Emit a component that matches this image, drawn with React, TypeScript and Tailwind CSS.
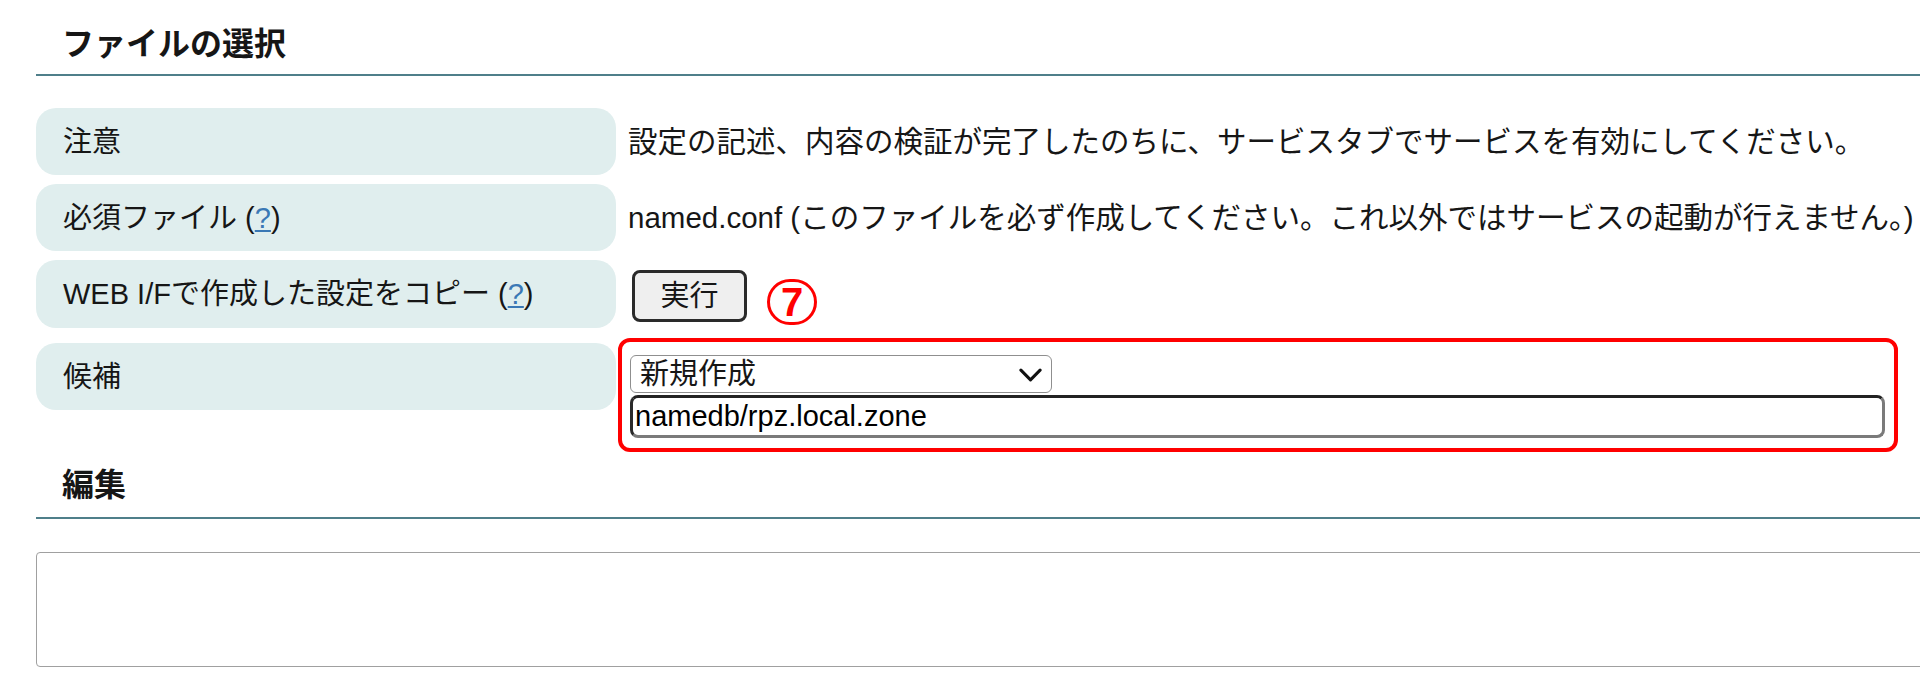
const labelBox =
  'w-[580px] h-[67px] shrink-0 rounded-[20px] bg-[#e0eeee] flex items-center pl-[27px]';

function Help() {
  return (
    <>
      {' '}(<a href="#" className="text-[#3a78b5] underline underline-offset-2">?</a>)
    </>
  );
}

function SectionTitle({ children, className }: { children: React.ReactNode; className: string }) {
  return (
    <div className={`pl-[26px] border-b-2 border-[#4f7f8a] ${className}`}>
      <h2 className="text-[32px] font-bold leading-[36px]">{children}</h2>
    </div>
  );
}

export default function App() {
  return (
    <div className="w-[1920px] h-[696px] overflow-hidden bg-white pl-[36px] text-[29px] leading-[36px] text-[#161616] font-['Liberation_Sans','Noto_Sans_CJK_JP',sans-serif]">
      {/* ファイルの選択 */}
      <SectionTitle className="pt-[26px] pb-[12px]">ファイルの選択</SectionTitle>

      <div className="mt-[32px] flex flex-col">
        <div className="flex">
          <div className={labelBox}>注意</div>
          <div className="pl-[12px] flex items-center whitespace-nowrap text-[29.5px]">
            設定の記述、内容の検証が完了したのちに、サービスタブでサービスを有効にしてください。
          </div>
        </div>

        <div className="mt-[9px] flex">
          <div className={labelBox}>
            必須ファイル<Help />
          </div>
          <div className="pl-[12px] flex items-center whitespace-nowrap text-[29.5px]">
            named.conf (このファイルを必ず作成してください。これ以外ではサービスの起動が行えません。)
          </div>
        </div>

        <div className="mt-[9px] flex">
          <div className={`${labelBox} h-[68px]`}>
            WEB I/Fで作成した設定をコピー<Help />
          </div>
          <div className="pl-[16px] flex items-start pt-[10px]">
            <button className="w-[115px] h-[52px] rounded-[8px] border-[3px] border-[#2a2a2a] bg-[#efefef] text-[29px] leading-none">
              実行
            </button>
            {/* annotation marker */}
            <span className="ml-[20px] mt-[9px] w-[50px] h-[46px] rounded-full border-[3px] border-[#ff0000] flex items-center justify-center text-[#ff0000] text-[40px] font-bold leading-none">
              7
            </span>
          </div>
        </div>

        <div className="mt-[10px] flex items-start">
          <div className={`${labelBox} mt-[5px]`}>候補</div>
          <div className="ml-[2px] w-[1280px] rounded-[12px] border-4 border-[#ff0000] pt-[13px] pl-[8px] pr-[9px] pb-[10px]">
            <div className="relative w-[422px] h-[38px] rounded-[6px] border border-[#8f8f8f] bg-white flex items-center pl-[9px]">
              新規作成
              <svg
                viewBox="0 0 24 14"
                className="absolute right-[9px] top-[12px] w-[23px] h-[14px]"
                fill="none"
                stroke="#111"
                strokeWidth={3.2}
                strokeLinecap="round"
                strokeLinejoin="round"
              >
                <polyline points="2,2 12,12 22,2" />
              </svg>
            </div>
            <input
              readOnly
              value="namedb/rpz.local.zone"
              className="mt-[2px] w-full h-[43px] rounded-[8px] border-[3px] border-t-[#222] border-l-[#2a2a2a] border-r-[#7a7a7a] border-b-[#7a7a7a] bg-white px-[2px] text-[29px] text-black outline-none font-['Liberation_Sans',sans-serif]"
            />
          </div>
        </div>
      </div>

      {/* 編集 */}
      <SectionTitle className="pt-[15px] pb-[14px]">編集</SectionTitle>
      <textarea
        readOnly
        className="mt-[33px] block w-[1900px] h-[115px] rounded-[4px] border border-[#a0a0a0] bg-white resize-none outline-none"
      />
    </div>
  );
}
